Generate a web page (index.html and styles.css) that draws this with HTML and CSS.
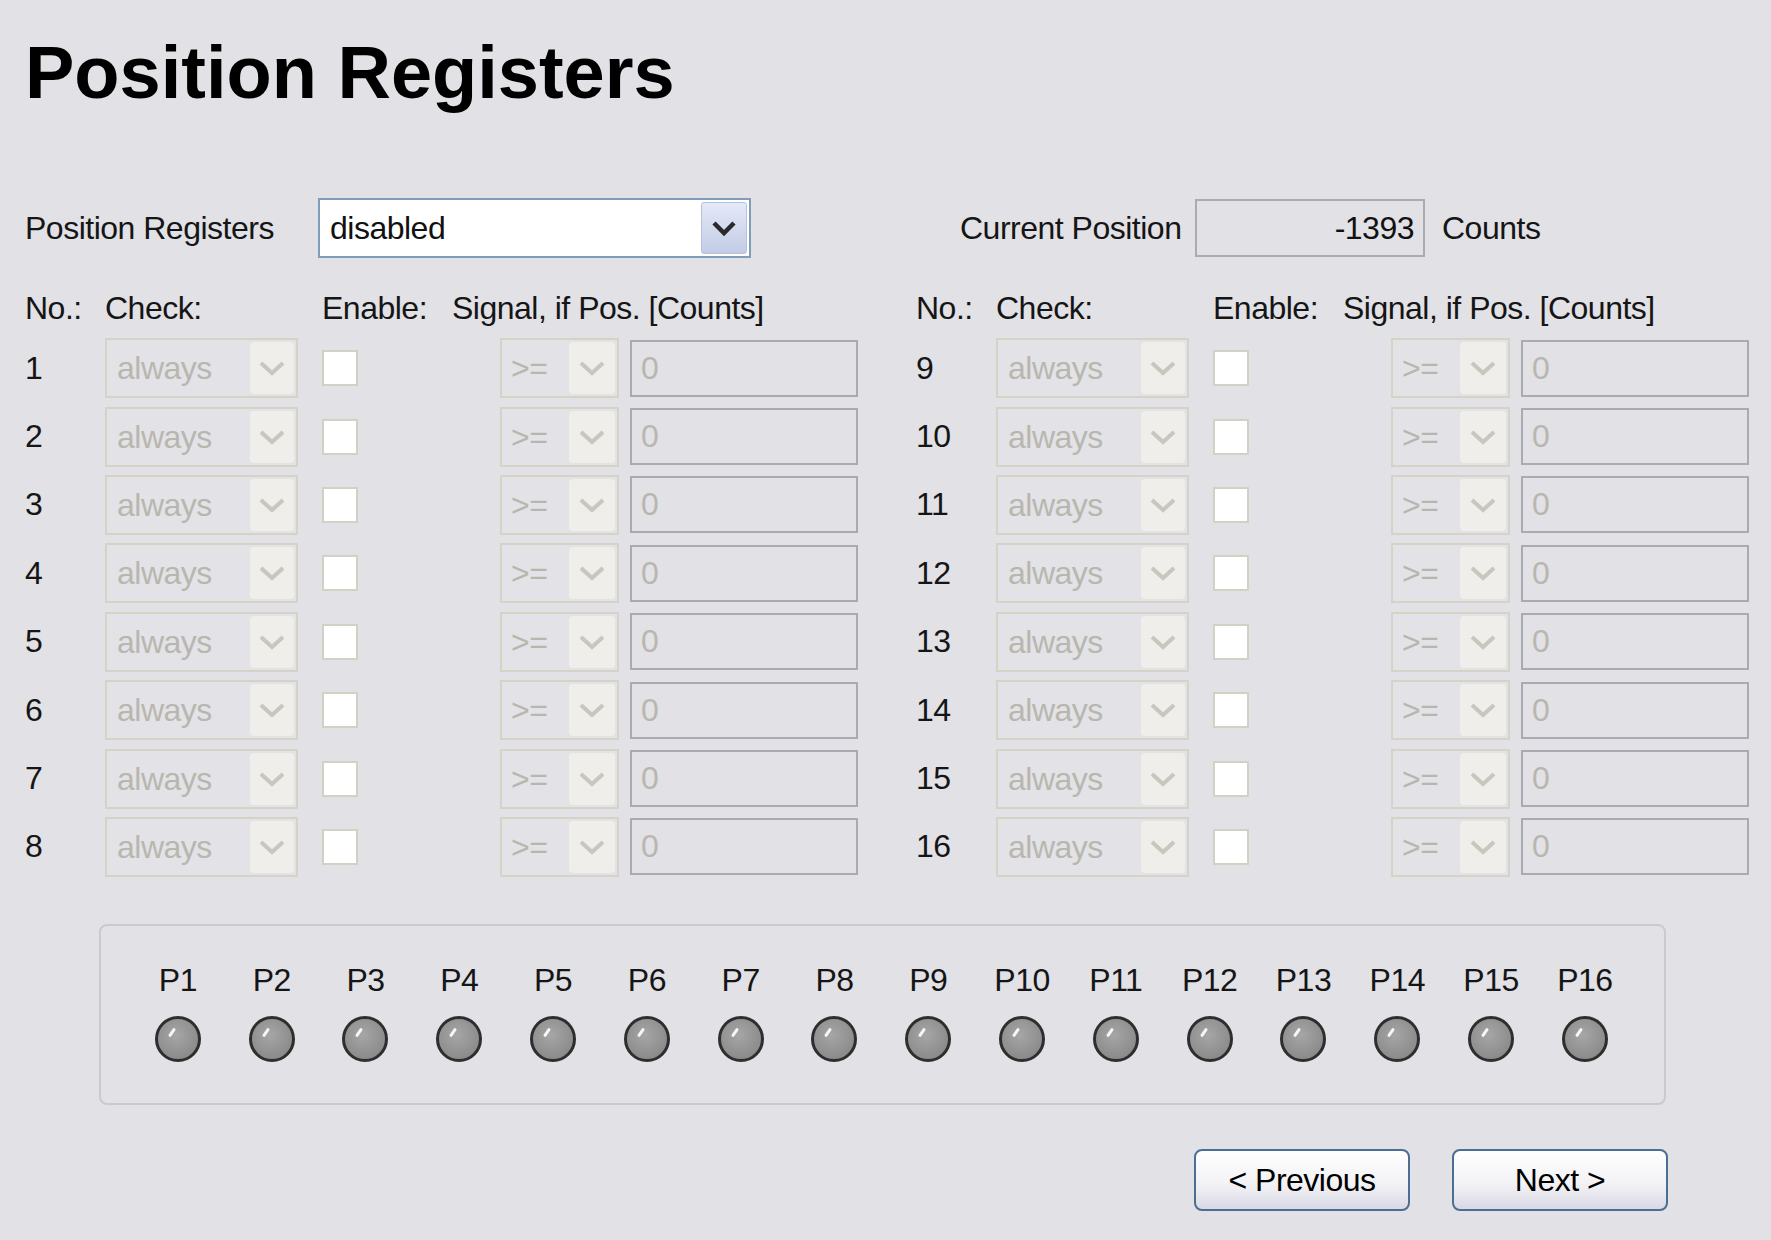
FILE: index.html
```html
<!DOCTYPE html>
<html lang="en">
<head>
  <meta charset="UTF-8">
  <title>Position Registers</title>
  <link rel="stylesheet" href="styles.css">
</head>
<body>

  <h1>Position Registers</h1>

  <div class="top-row">
    <span class="top-label">Position Registers</span>
    <div class="combo main-combo">
      <span class="combo-text">disabled</span>
      <span class="combo-btn">
        <svg width="26" height="18" viewBox="0 0 26 18"><polyline points="3,4 13,14 23,4" fill="none" stroke="#2a2a2a" stroke-width="4.5"/></svg>
      </span>
    </div>
    <span class="cur-label">Current Position</span>
    <div class="cur-box">-1393</div>
    <span class="unit">Counts</span>
  </div>

  <div class="registers">
    <div class="reg-col" id="colA"></div>
    <div class="reg-col" id="colB"></div>
  </div>

  <div class="led-panel" id="ledPanel"></div>

  <div class="nav">
    <button class="nav-btn">&lt; Previous</button>
    <button class="nav-btn">Next &gt;</button>
  </div>

  <script>
    const chevron = `<svg width="26" height="16" viewBox="0 0 26 16"><polyline points="2,3 13,13 24,3" fill="none" stroke="#c8c7be" stroke-width="4"/></svg>`;

    function buildColumn(el, first) {
      let html = `
        <div class="reg-head">
          <span class="h-no">No.:</span>
          <span class="h-check">Check:</span>
          <span class="h-enable">Enable:</span>
          <span>Signal, if Pos. [Counts]</span>
        </div>
        <div class="reg-rows">`;
      for (let i = first; i < first + 8; i++) {
        html += `
          <div class="reg-row">
            <span class="reg-no">${i}</span>
            <div class="combo off check-combo">
              <span class="combo-text">always</span>
              <span class="combo-btn">${chevron}</span>
            </div>
            <span class="chk"></span>
            <div class="combo off op-combo">
              <span class="combo-text">&gt;=</span>
              <span class="combo-btn">${chevron}</span>
            </div>
            <div class="val-box">0</div>
          </div>`;
      }
      html += `</div>`;
      el.innerHTML = html;
    }

    buildColumn(document.getElementById("colA"), 1);
    buildColumn(document.getElementById("colB"), 9);

    const ledPanel = document.getElementById("ledPanel");
    for (let i = 1; i <= 16; i++) {
      const cell = document.createElement("div");
      cell.className = "led-cell";
      cell.innerHTML = `<span class="led-label">P${i}</span><span class="led"></span>`;
      ledPanel.appendChild(cell);
    }
  </script>

</body>
</html>
```

FILE: styles.css
```css
body {
  margin: 0;
  padding: 36px 0 0 25px;
  background-color: #e1e1e6;
  font-family: 'Liberation Sans', Arial, sans-serif;
  font-size: 32px;
  letter-spacing: -0.5px;
  color: #151515;
}
h1 {
  margin: 0;
  font-size: 74px;
  line-height: 74px;
  font-weight: bold;
  letter-spacing: 0;
  color: #000;
}

/* top line */
.top-row {
  display: flex;
  align-items: center;
  height: 60px;
  margin-top: 88px;
}
.top-label { width: 293px; }
.cur-label { margin-left: 209px; width: 235px; }
.cur-box {
  box-sizing: border-box;
  width: 230px;
  height: 58px;
  line-height: 54px;
  padding-right: 9px;
  text-align: right;
  border: 2px solid #a9aab2;
  color: #111;
}
.unit { margin-left: 17px; }

/* combo boxes */
.combo {
  box-sizing: border-box;
  display: flex;
  align-items: stretch;
  height: 60px;
  border: 2px solid #d5d3c6;
  background: #e3e2e7;
}
.combo-text {
  flex: 1;
  line-height: 56px;
  padding-left: 10px;
  color: #b8b7af;
  white-space: nowrap;
}
.combo-btn {
  width: 44px;
  margin: 2px;
  display: flex;
  align-items: center;
  justify-content: center;
  border-radius: 4px;
  background: #efeeea;
}
.main-combo {
  width: 433px;
  border-color: #7f9db9;
  background: #fff;
}
.main-combo .combo-text { color: #111; }
.main-combo .combo-btn {
  background: linear-gradient(#e4e9f7, #c3cce6);
  border: 1px solid #b6c1dc;
  border-radius: 3px;
}
.check-combo { width: 193px; }
.op-combo { width: 119px; }
.op-combo .combo-text { padding-left: 9px; }
.op-combo .combo-btn { width: 46px; }

/* register table */
.registers {
  display: flex;
  gap: 58px;
  margin-top: 30px;
}
.reg-col { width: 833px; }
.reg-head {
  display: flex;
  height: 40px;
  line-height: 40px;
}
.h-no { width: 80px; }
.h-check { width: 217px; }
.h-enable { width: 130px; }
.reg-rows { margin-top: 6px; }
.reg-row {
  display: grid;
  grid-template-columns: 80px 217px 178px 130px 228px;
  align-items: center;
  height: 68.4px;
}
.chk {
  box-sizing: border-box;
  width: 36px;
  height: 36px;
  background: #fff;
  border: 2px solid #d3d1c4;
}
.val-box {
  box-sizing: border-box;
  height: 57px;
  line-height: 53px;
  padding-left: 9px;
  border: 2px solid #a9aab2;
  color: #b8b7af;
}

/* signal lamps */
.led-panel {
  box-sizing: border-box;
  display: flex;
  width: 1567px;
  margin: 43px 0 0 74px;
  padding: 34px 0 41px 30px;
  border: 2px solid #cacace;
  border-radius: 8px;
}
.led-cell {
  width: 93.8px;
  display: flex;
  flex-direction: column;
  align-items: center;
}
.led-label { line-height: 40px; }
.led {
  position: relative;
  box-sizing: border-box;
  width: 46px;
  height: 46px;
  margin-top: 16px;
  border: 3px solid #2e2e2e;
  border-radius: 50%;
  background: radial-gradient(circle at 45% 40%, #a6a6a6, #8c8c8c 70%, #7c7c7c);
}
.led::after {
  content: "";
  position: absolute;
  left: 9px;
  top: 12px;
  width: 10px;
  height: 3px;
  border-radius: 2px;
  background: #f6f6f6;
  transform: rotate(-55deg);
}

/* wizard buttons */
.nav {
  display: flex;
  justify-content: flex-end;
  gap: 42px;
  width: 1643px;
  margin-top: 44px;
}
.nav-btn {
  width: 216px;
  height: 62px;
  font-family: inherit;
  font-size: 32px;
  letter-spacing: -0.5px;
  color: #000;
  border: 2px solid #4c6d94;
  border-radius: 8px;
  background: linear-gradient(#ffffff, #f3f3f6 55%, #d9d9e5);
  cursor: pointer;
}
```
